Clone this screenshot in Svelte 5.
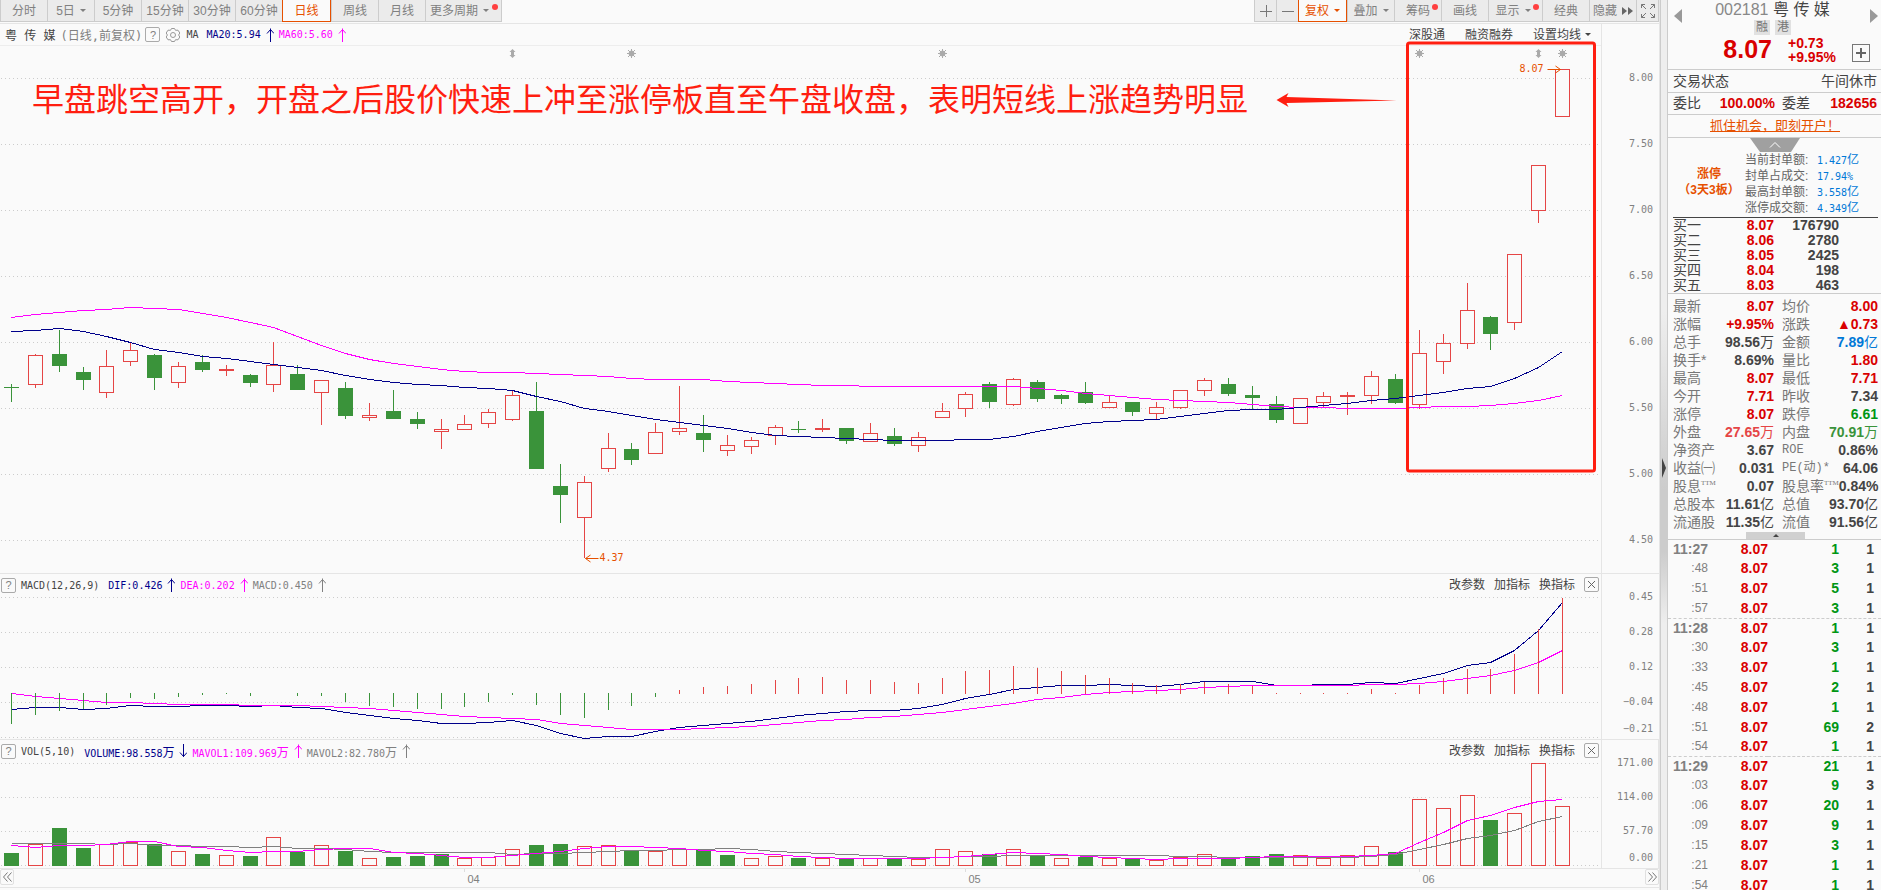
<script>
    let plotWidth = $state(1601);

    const periods = ['分时', '5日', '5分钟', '15分钟', '30分钟', '60分钟', '日线', '周线', '月线', '更多周期'];

    // body top, body bottom, high, low
    const candles = [
        ['g', 387, 388, 384, 402], ['r', 355, 385, 354, 388], ['g', 354, 366, 330, 372], ['g', 372, 380, 367, 390],
        ['r', 366, 393, 350, 398], ['r', 350, 362, 342, 366], ['g', 355, 378, 354, 390], ['r', 366, 383, 362, 388],
        ['g', 362, 370, 355, 372], ['r', 369, 371, 365, 376], ['g', 375, 383, 374, 387], ['r', 365, 385, 342, 392],
        ['g', 374, 390, 365, 390], ['r', 380, 393, 380, 425], ['g', 388, 416, 382, 419], ['r', 415, 418, 403, 421],
        ['g', 411, 419, 390, 419], ['g', 419, 424, 412, 429], ['r', 429, 432, 419, 449], ['r', 424, 430, 415, 430],
        ['r', 412, 424, 409, 428], ['r', 395, 420, 391, 421], ['g', 411, 469, 382, 469], ['g', 486, 495, 464, 523],
        ['r', 482, 518, 476, 558], ['r', 448, 469, 433, 472], ['g', 449, 460, 443, 465], ['r', 432, 454, 423, 454],
        ['r', 428, 432, 386, 435], ['g', 433, 440, 415, 452], ['r', 445, 451, 435, 456], ['r', 440, 447, 437, 454],
        ['r', 427, 436, 425, 445], ['g', 429, 430, 421, 433], ['r', 428, 430, 419, 432], ['g', 428, 441, 428, 444],
        ['r', 433, 442, 423, 442], ['g', 436, 444, 428, 446], ['r', 437, 446, 432, 452], ['r', 411, 418, 403, 418],
        ['r', 394, 409, 392, 417], ['g', 384, 402, 382, 408], ['r', 379, 405, 378, 406], ['g', 382, 399, 380, 402],
        ['g', 395, 399, 394, 404], ['g', 392, 403, 382, 404], ['r', 402, 408, 396, 408], ['g', 402, 412, 402, 416],
        ['r', 407, 414, 402, 419], ['r', 390, 408, 390, 409], ['r', 380, 391, 378, 396], ['g', 384, 394, 378, 396],
        ['g', 395, 398, 386, 409], ['g', 404, 420, 396, 423], ['r', 398, 424, 398, 424], ['r', 396, 403, 392, 407],
        ['r', 395, 397, 392, 415], ['r', 376, 396, 371, 404], ['g', 379, 403, 374, 404], ['r', 353, 405, 330, 409],
        ['r', 343, 362, 334, 374], ['r', 310, 344, 283, 349], ['g', 317, 334, 316, 350], ['r', 254, 323, 254, 330],
        ['r', 165, 211, 165, 223], ['r', 69, 117, 69, 117]
    ];

    const ma20 = [331, 330, 328, 331, 336, 342, 349, 352, 356, 358, 361, 364, 367, 370, 375, 379, 382, 384, 385, 387, 388, 390, 396, 401, 408, 411, 415, 419, 422, 425, 428, 432, 435, 436, 437, 438, 439, 440, 440, 440, 439, 439, 436, 431, 427, 423, 421, 420, 419, 416, 413, 410, 409, 409, 407, 405, 403, 400, 398, 395, 392, 388, 386, 378, 367, 351];
    const ma60 = [317, 314, 312, 310, 309, 307, 308, 309, 313, 317, 322, 327, 336, 345, 353, 359, 363, 366, 369, 371, 372, 372, 373, 374, 375, 376, 378, 379, 379, 379, 381, 382, 383, 384, 385, 385, 386, 386, 386, 386, 386, 386, 386, 388, 390, 393, 395, 397, 399, 400, 401, 402, 404, 406, 407, 407, 408, 408, 408, 407, 406, 406, 405, 403, 400, 395];

    const macd = [724, 715, 711, 709, 705, 698, 699, 697, 695, 694, 696, 693, 696, 696, 702, 706, 707, 709, 709, 707, 702, 695, 705, 715, 718, 710, 706, 697, 690, 687, 686, 684, 680, 678, 677, 680, 680, 682, 683, 678, 671, 670, 666, 668, 671, 675, 678, 683, 685, 684, 682, 684, 686, 693, 693, 693, 693, 689, 693, 685, 678, 669, 669, 654, 629, 598];
    const dif = [709, 707, 707, 709, 708, 705, 706, 706, 705, 705, 706, 705, 707, 708, 712, 715, 718, 720, 723, 723, 722, 720, 725, 733, 738, 736, 736, 731, 727, 725, 723, 721, 718, 715, 713, 711, 710, 710, 708, 704, 698, 694, 689, 687, 685, 685, 684, 685, 686, 684, 681, 681, 681, 685, 685, 684, 684, 682, 683, 678, 673, 665, 662, 650, 630, 602];
    const dea = [693, 696, 698, 700, 702, 702, 703, 704, 704, 704, 705, 705, 705, 706, 707, 708, 710, 712, 714, 716, 717, 718, 719, 723, 725, 727, 729, 729, 729, 728, 727, 726, 724, 722, 720, 719, 717, 716, 714, 712, 709, 706, 703, 699, 697, 694, 692, 691, 690, 689, 687, 686, 685, 685, 685, 685, 685, 684, 684, 683, 681, 678, 675, 670, 662, 650];

    const volume = [853, 844, 828, 848, 844, 842, 844, 851, 854, 855, 856, 837, 852, 845, 851, 858, 857, 856, 854, 858, 857, 849, 845, 844, 846, 845, 850, 851, 849, 849, 855, 858, 856, 858, 858, 859, 858, 859, 859, 849, 851, 854, 849, 855, 858, 857, 858, 859, 860, 857, 854, 858, 856, 854, 855, 858, 855, 846, 852, 799, 808, 795, 820, 813, 763, 806];
    const volumeSide = 'grggrrgrgrgrgrgrgggrrrggrrgrrggrrgrgrgrrrgrgrgrgrrrgggrrrrgrrrgrrr';
    const mavol1 = [845, 847, 845, 845, 844, 841, 841, 846, 847, 850, 852, 851, 851, 849, 848, 848, 852, 853, 855, 857, 857, 855, 853, 851, 848, 846, 846, 847, 848, 850, 851, 853, 854, 856, 857, 858, 858, 858, 858, 857, 856, 854, 852, 853, 854, 856, 857, 858, 859, 858, 858, 858, 857, 856, 856, 856, 856, 855, 853, 842, 832, 820, 815, 807, 801, 799];
    const mavol2 = [843, 843, 843, 843, 844, 843, 845, 845, 846, 846, 847, 846, 848, 848, 849, 851, 852, 852, 852, 852, 852, 854, 853, 853, 852, 851, 850, 850, 849, 849, 848, 849, 851, 852, 853, 854, 855, 856, 857, 857, 856, 856, 855, 855, 855, 855, 855, 855, 855, 856, 856, 857, 857, 857, 857, 857, 857, 856, 854, 849, 844, 838, 835, 830, 821, 816];

    const bids = [
        ['买一', '8.07', '176790'],
        ['买二', '8.06', '2780'],
        ['买三', '8.05', '2425'],
        ['买四', '8.04', '198'],
        ['买五', '8.03', '463']
    ];

    const sealed = [
        ['当前封单额:', '1.427', '亿'],
        ['封单占成交:', '17.94%', ''],
        ['最高封单额:', '3.558', '亿'],
        ['涨停成交额:', '4.349', '亿']
    ];

    // label, sup, value, unit, colour
    const stats = [
        ['最新', '', '8.07', '', 'up'], ['均价', '', '8.00', '', 'up'],
        ['涨幅', '', '+9.95%', '', 'up'], ['涨跌', '', '▲0.73', '', 'up'],
        ['总手', '', '98.56', '万', ''], ['金额', '', '7.89', '亿', 'blue'],
        ['换手*', '', '8.69%', '', ''], ['量比', '', '1.80', '', 'up'],
        ['最高', '', '8.07', '', 'up'], ['最低', '', '7.71', '', 'up'],
        ['今开', '', '7.71', '', 'up'], ['昨收', '', '7.34', '', ''],
        ['涨停', '', '8.07', '', 'up'], ['跌停', '', '6.61', '', 'down'],
        ['外盘', '', '27.65', '万', 'outer'], ['内盘', '', '70.91', '万', 'inner'],
        ['净资产', '', '3.67', '', ''], ['ROE', '', '0.86%', '', ''],
        ['收益㈠', '', '0.031', '', ''], ['PE(动)*', '', '64.06', '', ''],
        ['股息', 'TTM', '0.07', '', ''], ['股息率', 'TTM', '0.84%', '', ''],
        ['总股本', '', '11.61', '亿', ''], ['总值', '', '93.70', '亿', ''],
        ['流通股', '', '11.35', '亿', ''], ['流值', '', '91.56', '亿', '']
    ];

    const ticks = [
        [['11:27', 1, 1], [':48', 3, 1], [':51', 5, 1], [':57', 3, 1]],
        [['11:28', 1, 1], [':30', 3, 1], [':33', 1, 1], [':45', 2, 1], [':48', 1, 1], [':51', 69, 2], [':54', 1, 1]],
        [['11:29', 21, 1], [':03', 9, 3], [':06', 20, 1], [':09', 9, 1], [':15', 3, 1], [':21', 1, 1], [':54', 1, 1]]
    ];

    const months = [[19, '04'], [40, '05'], [59, '06']];
    const marks = [[21, 'split'], [26, 'sun'], [39, 'sun'], [59, 'sun'], [64, 'split'], [65, 'sun']];

    let step = $derived((plotWidth - 50) / 65);
    const at = (i) => Math.round(11 + i * step) + 0.5;
    const line = (values) => values.map((y, i) => `${at(i)},${y + 0.5}`).join(' ');
</script>

{#snippet arrow(dir, color)}
    <svg class="arrow" width="8" height="14" viewBox="0 0 8 14" stroke={color} fill="none">
        {#if dir === 'up'}
            <path d="M4.5 0.5V14M1 5.5L4.5 1.5L8 5.5" />
        {:else}
            <path d="M4.5 0V13M1 8.5L4.5 12.5L8 8.5" />
        {/if}
    </svg>
{/snippet}

{#snippet bar(i, side, top, bottom)}
    {#if side === 'g' || bottom - top < 3}
        <rect x={at(i) - 7.5} y={top} width="15" height={bottom - top} fill={side === 'g' ? '#3a933a' : '#e54545'} />
    {:else}
        <rect x={at(i) - 7} y={top + 0.5} width="14" height={bottom - top - 1} fill="#fafafa" stroke="#e54545" />
    {/if}
{/snippet}

{#snippet grid(rows)}
    {#each rows as y}
        <line x1="1" x2={plotWidth} y1={y + 0.5} y2={y + 0.5} stroke="#cccccc" stroke-dasharray="1 3" />
    {/each}
{/snippet}

{#snippet tools()}
    <div class="tools">
        <button>改参数</button>
        <button>加指标</button>
        <button>换指标</button>
        <button class="box" aria-label="关闭">
            <svg width="7" height="7" viewBox="0 0 7 7" stroke="#666"><path d="M0 0L7 7M7 0L0 7" /></svg>
        </button>
    </div>
{/snippet}

<div class="app">
    <main>
        <nav class="toolbar">
            {#each periods as name}
                <button class:active={name === '日线'} class:wide={name === '更多周期'}>
                    {name}
                    {#if name === '5日' || name === '更多周期'}<i class="caret"></i>{/if}
                    {#if name === '更多周期'}<i class="dot"></i>{/if}
                </button>
            {/each}
            <span class="space"></span>
            <button class="small" aria-label="放大">
                <svg width="12" height="12" viewBox="0 0 12 12" stroke="#777"><path d="M0 6.5H12M6.5 0V12" /></svg>
            </button>
            <button class="small" aria-label="缩小">
                <svg width="12" height="12" viewBox="0 0 12 12" stroke="#777"><path d="M0 6.5H12" /></svg>
            </button>
            <button class="active">复权<i class="caret"></i></button>
            <button>叠加<i class="caret"></i></button>
            <button>筹码<i class="dot"></i></button>
            <button>画线</button>
            <button class="medium">显示<i class="caret"></i><i class="dot"></i></button>
            <button>经典</button>
            <button>隐藏
                <svg width="11" height="8" viewBox="0 0 11 8" fill="#666"><path d="M0 0L5 4L0 8ZM6 0L11 4L6 8Z" /></svg>
            </button>
            <button class="small last" aria-label="全屏">
                <svg width="14" height="14" viewBox="0 0 14 14" fill="none" stroke="#777">
                    <path d="M0.5 4V0.5H4M0.5 0.5L5 5M10 0.5H13.5V4M13.5 0.5L9 5M0.5 10V13.5H4M0.5 13.5L5 9M13.5 10V13.5H10M13.5 13.5L9 9" />
                </svg>
            </button>
        </nav>

        <section class="panel">
            <div class="plot" bind:clientWidth={plotWidth}>
                <header class="price-head">
                    <span class="cn dark">粤 传 媒</span>
                    <span class="cn period">(日线,前复权)</span>
                    <button class="box">?</button>
                    <svg class="gear" width="16" height="16" viewBox="0 0 16 16" fill="none" stroke="#999">
                        <path d="M6.5 1.5H9.5L10.5 3.3L13 3.2L14.8 6L13.6 8L14.8 10L13 12.8L10.5 12.7L9.5 14.5H6.5L5.5 12.7L3 12.8L1.2 10L2.4 8L1.2 6L3 3.2L5.5 3.3Z" />
                        <circle cx="8" cy="8" r="2.5" />
                    </svg>
                    <span class="dark">MA</span>
                    <span class="navy first">MA20:5.94</span>{@render arrow('up', '#00008b')}
                    <span class="pink">MA60:5.60</span>{@render arrow('up', '#ff00ff')}
                    <span class="space"></span>
                    <div class="links">
                        <button>深股通</button>
                        <button>融资融券</button>
                        <button>设置均线<i class="caret"></i></button>
                    </div>
                </header>
                <svg class="chart" width="100%" height="527">
                    <g transform="translate(0 -46)">
                        {@render grid([78, 144, 210, 276, 342, 408, 474, 540])}
                        {#each candles as [side, top, bottom, high, low], i}
                            <line x1={at(i)} x2={at(i)} y1={high} y2={low} stroke={side === 'g' ? '#3a933a' : '#e54545'} />
                            {@render bar(i, side, top, bottom)}
                        {/each}
                        <polyline points={line(ma60)} fill="none" stroke="#ff00ff" />
                        <polyline points={line(ma20)} fill="none" stroke="#00008b" />

                        {#each marks as [i, kind]}
                            {#if kind === 'sun'}
                                <g transform="translate({at(i)} 53.5)" stroke="#aaa" fill="#aaa">
                                    <circle r="2.5" />
                                    <path d="M0 -4.5V4.5M-4.5 0H4.5M-3.5 -3.5L3.5 3.5M3.5 -3.5L-3.5 3.5" />
                                </g>
                            {:else}
                                <path transform="translate({at(i)} 53.5)" d="M0 -4.5L3 -1.5H1.5V1.5H3L0 4.5L-3 1.5H-1.5V-1.5H-3Z" fill="#aaa" />
                            {/if}
                        {/each}

                        <g stroke="#e65000" fill="none">
                            <path d="M{at(65) - 15} 69.5H{at(65) - 2}M{at(65) - 7} 66L{at(65) - 2} 69.5L{at(65) - 7} 73" />
                            <path d="M{at(24) + 1} 558.5H{at(24) + 14}M{at(24) + 6} 555L{at(24) + 1} 558.5L{at(24) + 6} 562" />
                        </g>
                        <text class="extreme" x={at(65) - 43} y="72">8.07</text>
                        <text class="extreme" x={at(24) + 15} y="561">4.37</text>

                        <rect x={at(59) - 12} y="43" width={at(65) - at(59) + 44} height="428" rx="2" fill="none" stroke="#ff1e10" stroke-width="3" />
                        <path d="M{at(59) - 143} 100L{at(59) - 131} 93L{at(59) - 133} 97L{at(59) - 23} 100.5L{at(59) - 133} 103L{at(59) - 131} 107Z" fill="#ff1e10" />
                        <text class="note" x="32" y="111">早盘跳空高开，开盘之后股价快速上冲至涨停板直至午盘收盘，表明短线上涨趋势明显</text>
                    </g>
                </svg>
            </div>
            <div class="scale price-scale">
                {#each ['8.00', '7.50', '7.00', '6.50', '6.00', '5.50', '5.00', '4.50'] as label}
                    <span>{label}</span>
                {/each}
            </div>
        </section>

        <section class="panel">
            <div class="plot">
                <header>
                    <button class="box">?</button>
                    <span class="dark title">MACD(12,26,9)</span>
                    <span class="navy">DIF:0.426</span>{@render arrow('up', '#00008b')}
                    <span class="pink">DEA:0.202</span>{@render arrow('up', '#ff00ff')}
                    <span>MACD:0.450</span>{@render arrow('up', '#808080')}
                    <span class="space"></span>
                    {@render tools()}
                </header>
                <svg width="100%" height="143">
                    <g transform="translate(0 -596)">
                        {@render grid([597, 632, 667, 702, 737])}
                        <polyline points={line(dif)} fill="none" stroke="#00008b" />
                        <polyline points={line(dea)} fill="none" stroke="#ff00ff" />
                        {#each macd as y, i}
                            {#if i < 28}
                                <line x1={at(i)} x2={at(i)} y1="693" y2={y} stroke="#3a933a" />
                            {:else}
                                <line x1={at(i)} x2={at(i)} y1={y} y2="694" stroke="#e54545" />
                            {/if}
                        {/each}
                    </g>
                </svg>
            </div>
            <div class="scale macd-scale">
                {#each ['0.45', '0.28', '0.12', '−0.04', '−0.21'] as label}
                    <span>{label}</span>
                {/each}
            </div>
        </section>

        <section class="panel">
            <div class="plot">
                <header>
                    <button class="box">?</button>
                    <span class="dark title">VOL(5,10)</span>
                    <span class="navy">VOLUME:98.558<b class="cn">万</b></span>{@render arrow('down', '#00008b')}
                    <span class="pink">MAVOL1:109.969<b class="cn">万</b></span>{@render arrow('up', '#ff00ff')}
                    <span>MAVOL2:82.780<b class="cn">万</b></span>{@render arrow('up', '#808080')}
                    <span class="space"></span>
                    {@render tools()}
                </header>
                <svg width="100%" height="106">
                    <g transform="translate(0 -762)">
                        {@render grid([763, 797, 831, 865])}
                        {#each volume as y, i}
                            {@render bar(i, volumeSide[i], y, 866)}
                        {/each}
                        <polyline points={line(mavol2)} fill="none" stroke="#808080" />
                        <polyline points={line(mavol1)} fill="none" stroke="#ff00ff" />
                    </g>
                </svg>
            </div>
            <div class="scale vol-scale">
                {#each ['171.00', '114.00', '57.70', '0.00'] as label}
                    <span>{label}</span>
                {/each}
            </div>
        </section>

        <footer>
            <button aria-label="向前">
                <svg width="9" height="10" viewBox="0 0 9 10" fill="none" stroke="#777"><path d="M4.5 0.5L0.5 5L4.5 9.5M8.5 0.5L4.5 5L8.5 9.5" /></svg>
            </button>
            <svg class="months" height="18">
                {#each months as [i, label]}
                    <line x1={at(i) - 14} x2={at(i) - 14} y1="0" y2="3" stroke="#ddd" />
                    <text x={at(i) - 11} y="14">{label}</text>
                {/each}
            </svg>
            <button aria-label="向后">
                <svg width="9" height="10" viewBox="0 0 9 10" fill="none" stroke="#777"><path d="M0.5 0.5L4.5 5L0.5 9.5M4.5 0.5L8.5 5L4.5 9.5" /></svg>
            </button>
        </footer>
    </main>

    <div class="splitter">
        <svg width="4" height="20" viewBox="0 0 4 20"><path d="M0 0L4 10L0 20Z" fill="#444" /></svg>
    </div>

    <aside>
        <div class="stock">
            <button class="turn" aria-label="上一只">
                <svg width="8" height="14" viewBox="0 0 8 14"><path d="M8 0V14L0 7Z" fill="#999" /></svg>
            </button>
            <div class="names">
                <h1>002181 <span>粤 传 媒</span></h1>
                <div class="tags"><span>融</span><span>港</span></div>
            </div>
            <button class="turn" aria-label="下一只">
                <svg width="8" height="14" viewBox="0 0 8 14"><path d="M0 0V14L8 7Z" fill="#999" /></svg>
            </button>
        </div>
        <div class="quote">
            <strong>8.07</strong>
            <div class="change"><span>+0.73</span><span>+9.95%</span></div>
            <button aria-label="加自选">
                <svg width="10" height="10" viewBox="0 0 10 10" stroke="#666" stroke-width="2"><path d="M0 5H10M5 0V10" /></svg>
            </button>
        </div>
        <div class="row"><span>交易状态</span><span>午间休市</span></div>
        <div class="row weib">
            <span>委比</span><b class="up">100.00%</b>
            <span>委差</span><b class="up">182656</b>
        </div>
        <div class="row promo"><a href="#open">抓住机会，即刻开户！</a></div>

        <button class="collapse" aria-label="收起">
            <svg width="50" height="14" viewBox="0 0 50 14">
                <path d="M0 0H50L41 14H10Z" fill="#a0a0a0" />
                <path d="M20 9.5L25 4.5L30 9.5" fill="none" stroke="#fff" />
            </svg>
        </button>

        <div class="limit">
            <div class="board">涨停<br />（3天3板）</div>
            <dl>
                {#each sealed as [label, value, unit]}
                    <div><dt>{label}</dt><dd>{value}<b class="cn">{unit}</b></dd></div>
                {/each}
            </dl>
        </div>

        <table class="bids">
            <tbody>
                {#each bids as [label, price, amount]}
                    <tr><th>{label}</th><td class="up">{price}</td><td>{amount}</td></tr>
                {/each}
            </tbody>
        </table>

        <dl class="stats">
            {#each stats as [label, sup, value, unit, color]}
                <div>
                    <dt class:latin={label === 'ROE' || label === 'PE(动)*'}>{label}{#if sup}<sup>{sup}</sup>{/if}</dt>
                    <dd class={color}>{value}<span>{unit}</span></dd>
                </div>
            {/each}
        </dl>
        <button class="handle" aria-label="展开">
            <svg width="6" height="3" viewBox="0 0 6 3"><path d="M0 3L3 0L6 3Z" fill="#444" /></svg>
        </button>

        <table class="ticks">
            {#each ticks as group}
                <tbody>
                    {#each group as [time, amount, count]}
                        <tr>
                            <th>{time}</th>
                            <td class="up">8.07</td>
                            <td class="down">{amount}</td>
                            <td>{count}</td>
                        </tr>
                    {/each}
                </tbody>
            {/each}
        </table>
    </aside>
</div>

<style>
:global(body) {
    background: #fafafa;
}

.app {
    display: flex;
    height: 100vh;
    overflow: hidden;
    background: #fafafa;
    color: #808080;
    font-family: "DejaVu Sans Mono", "Noto Sans CJK SC", monospace;
    font-size: 10px;
}

main {
    flex: 1;
    min-width: 0;
    box-sizing: border-box;
    border-right: 1px solid #e5e5e5;
}

svg {
    display: block;
    flex: none;
}

polyline {
    shape-rendering: crispEdges;
}

button {
    box-sizing: border-box;
    margin: 0;
    padding: 0;
    border: 0;
    background: none;
    color: inherit;
    font-family: "Liberation Sans", "Noto Sans CJK SC", sans-serif;
    font-size: 12px;
    line-height: 16px;
    white-space: nowrap;
}

.cn {
    font-size: 12px;
    font-weight: normal;
}

.dark { color: #444; }
.navy { color: #00008b; }
.pink { color: #ff00ff; }
.up { color: #d90000; }
.down { color: #009614; }
.blue { color: #0078d7; }
.outer { color: #e54545; }
.inner { color: #3a933a; }

.space {
    flex: 1;
}

.caret {
    width: 0;
    height: 0;
    border: 3px solid transparent;
    border-top-color: currentColor;
    border-bottom: 0;
}

/* Toolbar */
.toolbar {
    display: flex;
    height: 22px;
    padding-bottom: 1px;
    border-bottom: 1px solid #e5e5e5;
}

.toolbar button {
    position: relative;
    display: flex;
    align-items: center;
    justify-content: center;
    gap: 5px;
    width: 47px;
    border: 1px solid #ccc;
    border-width: 0 0 1px 1px;
    background: #ebebeb;
}

.toolbar .wide {
    width: 77px;
    border-right-width: 1px;
    padding-right: 8px;
}

.toolbar .medium {
    width: 54px;
    padding-right: 5px;
}

.toolbar .small {
    width: 22px;
}

.toolbar .last {
    width: 23px;
    border-right-width: 1px;
}

.toolbar button.active {
    width: 49px;
    border: 1px solid #e65000;
    border-top: 0;
    background: #fafafa;
    color: #e65000;
}

.dot {
    position: absolute;
    top: 4px;
    right: 3px;
    width: 6px;
    height: 6px;
    border-radius: 50%;
    background: #ff4040;
}

/* Chart panels */
.panel {
    display: flex;
    border-bottom: 1px solid #e5e5e5;
}

.plot {
    flex: 1;
    min-width: 0;
}

.chart {
    overflow: visible;
}

header {
    display: flex;
    align-items: center;
    gap: 5px;
    height: 22px;
    padding-left: 1px;
    white-space: nowrap;
}

.price-head {
    height: 21px;
    padding-left: 5px;
    border-bottom: 1px solid #ededed;
}

.title {
    margin-right: 4px;
}

.period {
    width: 80px;
}

.first {
    margin-left: 3px;
}

.box {
    display: flex;
    align-items: center;
    justify-content: center;
    width: 15px;
    height: 15px;
    border: 1px solid #aaa;
    border-radius: 2px;
    font-size: 11px;
}

.tools {
    display: flex;
    gap: 9px;
    padding-right: 2px;
    color: #444;
}

.links {
    display: flex;
    gap: 20px;
    padding-right: 10px;
    color: #444;
}

.links button {
    display: flex;
    align-items: center;
    gap: 4px;
}

.extreme {
    fill: #e65000;
}

.note {
    fill: #ff1e10;
    font-family: "Noto Sans CJK SC", sans-serif;
    font-size: 32px;
}

.scale {
    display: flex;
    flex-direction: column;
    box-sizing: border-box;
    width: 58px;
    padding-right: 6px;
    border-left: 1px solid #e5e5e5;
    text-align: right;
}

.price-scale {
    padding-top: 21px;
    line-height: 66px;
}

.macd-scale {
    padding-top: 5px;
    line-height: 35px;
}

.vol-scale {
    padding-top: 6px;
    border-right: 1px solid #e5e5e5;
    padding-right: 5px;
    line-height: 34px;
}

.macd-scale span:last-child,
.vol-scale span:last-child {
    line-height: 20px;
}

footer {
    display: flex;
    height: 18px;
    border-bottom: 1px solid #e5e5e5;
}

footer button {
    display: flex;
    align-items: center;
    justify-content: center;
    width: 14px;
    height: 16px;
    border: 1px solid #e0e0e0;
    border-radius: 2px;
}

.months {
    flex: 1;
    fill: #808080;
}

.months text {
    font-family: "Liberation Sans", sans-serif;
    font-size: 11px;
}

.splitter {
    display: flex;
    align-items: center;
    box-sizing: border-box;
    width: 8px;
    padding: 46px 0 0 1px;
    border: 1px solid #ccc;
    border-width: 0 1px;
    background: linear-gradient(#eee 35%, #ccc 55%, #ccc 62%, #eee 70%);
}

/* Quote side */
aside {
    width: 213px;
    flex: none;
    font-family: "Liberation Sans", "Noto Sans CJK SC", sans-serif;
    font-size: 14px;
    color: #444;
}

.stock {
    display: flex;
    justify-content: space-between;
    height: 36px;
    padding: 0 3px 0 6px;
}

.turn {
    display: flex;
    padding-top: 9px;
}

.names {
    padding-right: 7px;
    text-align: center;
}

h1 {
    margin: 0;
    font-size: 16px;
    font-weight: normal;
    line-height: 20px;
    color: #888;
}

h1 span {
    color: #444;
}

.tags {
    display: flex;
    justify-content: center;
    gap: 5px;
    color: #777;
    font-size: 12px;
    line-height: 15px;
}

.tags span {
    width: 16px;
    background: #e1e1e1;
}

.quote {
    display: flex;
    align-items: center;
    justify-content: flex-end;
    height: 33px;
    padding-right: 11px;
    border-bottom: 1px solid #ccc;
    color: #d90000;
    font-weight: bold;
}

.quote strong {
    font-size: 25px;
    line-height: 28px;
    padding-bottom: 8px;
}

.change {
    display: flex;
    flex-direction: column;
    width: 64px;
    padding: 0 0 6px 16px;
    line-height: 14px;
}

.quote button {
    display: flex;
    align-items: center;
    justify-content: center;
    width: 18px;
    height: 18px;
    border: 1px solid #777;
}

.row {
    display: flex;
    justify-content: space-between;
    height: 22px;
    padding: 0 4px 0 5px;
    border-bottom: 1px solid #ccc;
    line-height: 22px;
    white-space: nowrap;
}

.weib {
    display: grid;
    grid-template-columns: 28px 74px 36px 1fr;
    height: 21px;
    line-height: 21px;
}

.weib b {
    text-align: right;
}

.weib span:nth-child(3) {
    padding-left: 7px;
}

.promo {
    justify-content: center;
    font-size: 13px;
}

.promo a {
    color: #e65000;
}

.collapse {
    display: block;
    margin: 0 auto 0 82px;
}

.limit {
    display: flex;
    margin: 0 3px 0 5px;
    border-bottom: 1px solid #444;
    font-size: 12px;
    line-height: 16px;
}

.board {
    display: flex;
    flex-direction: column;
    justify-content: center;
    width: 72px;
    padding-bottom: 6px;
    color: #e65000;
    font-weight: bold;
    text-align: center;
    white-space: nowrap;
}

dl {
    margin: 0;
}

dd {
    margin: 0;
}

.limit dl {
    padding-bottom: 1px;
}

.limit dl div {
    display: flex;
    align-items: center;
    height: 16px;
}

.limit dt {
    width: 72px;
    color: #666;
}

.limit dd {
    color: #0078d7;
    font-family: "DejaVu Sans Mono", "Noto Sans CJK SC", monospace;
    font-size: 10px;
}

table {
    width: 100%;
    border-collapse: collapse;
    table-layout: fixed;
}

th, td {
    padding: 0;
    text-align: right;
    font-weight: bold;
}

.bids {
    border-bottom: 1px solid #ccc;
}

.bids tr {
    height: 15px;
    line-height: 15px;
}

.bids th {
    width: 45px;
    padding-left: 5px;
    text-align: left;
    font-weight: normal;
}

.bids td:nth-child(2) {
    width: 56px;
}

.bids td:nth-child(3) {
    padding-right: 42px;
}

.stats {
    display: grid;
    grid-template-columns: 101px 96px;
    column-gap: 8px;
    padding: 3px 3px 1px 5px;
}

.stats div {
    display: flex;
    justify-content: space-between;
    height: 18px;
    line-height: 18px;
    white-space: nowrap;
}

.stats dt {
    color: #777;
}

.stats .latin {
    font-family: "Liberation Mono", "Noto Sans CJK SC", monospace;
    font-size: 12px;
}

.stats dd {
    font-weight: bold;
}

.stats dd span {
    font-weight: normal;
}

sup {
    font-family: "Liberation Serif", serif;
    font-size: 7px;
    line-height: 8px;
    vertical-align: 6px;
}

.handle {
    display: flex;
    align-items: center;
    justify-content: center;
    width: 59px;
    height: 7px;
    margin-left: 78px;
    background: #d0d0d0;
}

.ticks {
    border-top: 1px solid #ccc;
}

.ticks tbody + tbody {
    border-top: 1px dashed #ccc;
}

.ticks tr {
    height: 20px;
    line-height: 18px;
}

.ticks tr:first-child {
    height: 18px;
}

.ticks th {
    width: 40px;
    color: #808080;
    font-size: 12px;
    font-weight: normal;
}

.ticks tr:first-child th {
    font-size: 14px;
    font-weight: bold;
}

.ticks td:nth-child(2) {
    width: 60px;
}

.ticks td:nth-child(3) {
    width: 71px;
}

.ticks td:nth-child(4) {
    padding-right: 7px;
}
</style>
